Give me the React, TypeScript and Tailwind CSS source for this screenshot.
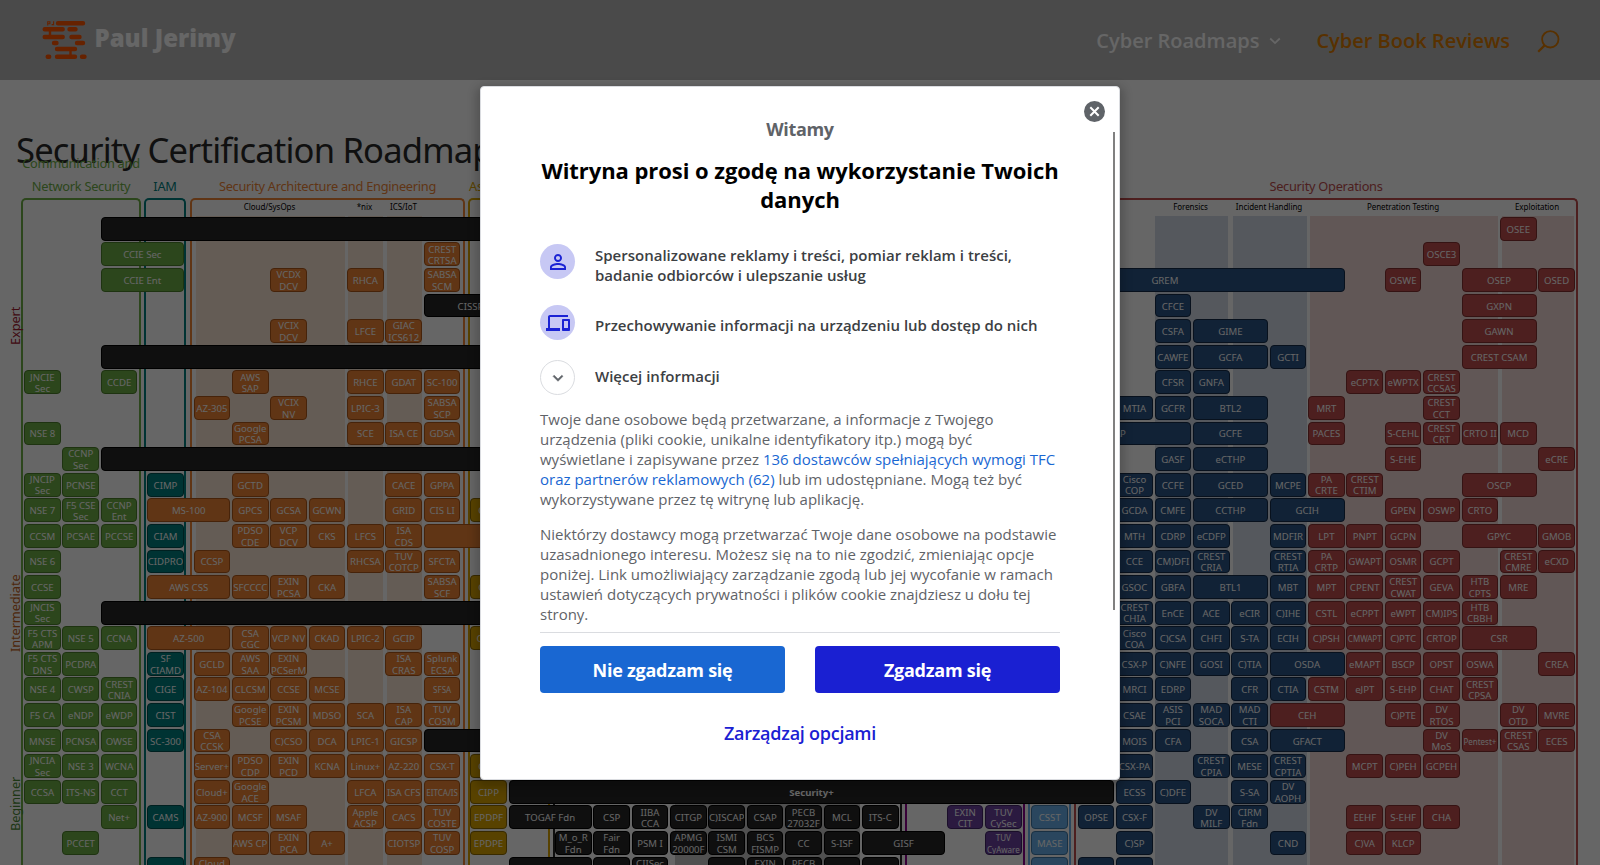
import React from "react";

type Tone = "g" | "t" | "o" | "y" | "k" | "p" | "l" | "b" | "r";

const TONES: Record<Tone, string> = {
  g: "bg-[#6fb046] border-[#4c802c]",
  t: "bg-[#008080] border-[#005050]",
  o: "bg-[#f08535] border-[#b0591a]",
  y: "bg-[#dca500] border-[#8c6900]",
  k: "bg-[#262626] border-[#000000]",
  p: "bg-[#6b41a0] border-[#412468]",
  l: "bg-[#69b0ea] border-[#3f79a8]",
  b: "bg-[#2b5587] border-[#142c4a]",
  r: "bg-[#c04e4e] border-[#853030]",
};

/* Each entry: tone, first column, optional "-" last column, label. "|" breaks the label. */
const ROWS: string[][] = [
  ["k3-33:", "r45:OSEE"],
  ["g3-5:CCIE Sec", "o13:CREST|CRTSA", "r43:OSCE3"],
  ["g3-5:CCIE Ent", "o9:VCDX|DCV", "o11:RHCA", "o13:SABSA|SCM", "b30-40:GREM", "r42:OSWE", "r44-45:OSEP", "r46:OSED"],
  ["k13-16:CISSP ISSAP", "b36:CFCE", "r44-45:GXPN"],
  ["o9:VCIX|DCV", "o11:LFCE", "o12:GIAC|ICS612", "b36:CSFA", "b37-38:GIME", "r44-45:GAWN"],
  ["k3-33:", "b36:CAWFE", "b37-38:GCFA", "b39:GCTI", "r44-45:CREST CSAM"],
  ["g1:JNCIE|Sec", "g3:CCDE", "o8:AWS|SAP", "o11:RHCE", "o12:GDAT", "o13:SC-100", "b36:CFSR", "b37:GNFA", "r41:eCPTX", "r42:eWPTX", "r43:CREST|CCSAS"],
  ["o7:AZ-305", "o9:VCIX|NV", "o11:LPIC-3", "o13:SABSA|SCP", "b35:MTIA", "b36:GCFR", "b37-38:BTL2", "r40:MRT", "r43:CREST|CCT"],
  ["g1:NSE 8", "o8:Google|PCSA", "o11:SCE", "o12:ISA CE", "o13:GDSA", "b32-36:CCSAP", "b37-38:GCFE", "r40:PACES", "r42:S-CEHL", "r43:CREST|CRT", "r44:CRTO II", "r45:MCD"],
  ["g2:CCNP|Sec", "k3-33:", "b36:GASF", "b37-38:eCTHP", "r42:S-EHE", "r46:eCRE"],
  ["g1:JNCIP|Sec", "g2:PCNSE", "t5:CIMP", "o8:GCTD", "o12:CACE", "o13:GPPA", "b35:Cisco|COP", "b36:CCFE", "b37-38:GCED", "b39:MCPE", "r40:PA|CRTE", "r41:CREST|CTIM", "r44-45:OSCP"],
  ["g1:NSE 7", "g2:F5 CSE|Sec", "g3:CCNP|Ent", "o5-7:MS-100", "o8:GPCS", "o9:GCSA", "o10:GCWN", "o12:GRID", "o13:CIS LI", "y15:CIPT", "b35:GCDA", "b36:CMFE", "b37-38:CCTHP", "b39-40:GCIH", "r42:GPEN", "r43:OSWP", "r44:CRTO"],
  ["g1:CCSM", "g2:PCSAE", "g3:PCCSE", "t5:CIAM", "o8:PDSO|CDE", "o9:VCP|DCV", "o10:CKS", "o11:LFCS", "o12:ISA|CDS", "o13-16:", "b35:MTH", "b36:CDRP", "b37:eCDFP", "b39:MDFIR", "r40:LPT", "r41:PNPT", "r42:GCPN", "r44-45:GPYC", "r46:GMOB"],
  ["g1:NSE 6", "t5:CIDPRO", "o7:CCSP", "o11:RHCSA", "o12:TUV|COTCP", "o13:SFCTA", "b35:CCE", "b36:CM)DFI", "b37:CREST|CRIA", "b39:CREST|RTIA", "r40:PA|CRTP", "r41:GWAPT", "r42:OSMR", "r43:GCPT", "r45:CREST|CMRE", "r46:eCXD"],
  ["g1:CCSE", "o5-7:AWS CSS", "o8:SFCCCC", "o9:EXIN|PCSA", "o10:CKA", "o13:SABSA|SCF", "y15:CIPT", "b35:GSOC", "b36:GBFA", "b37-38:BTL1", "b39:MBT", "r40:MPT", "r41:CPENT", "r42:CREST|CWAT", "r43:GEVA", "r44:HTB|CPTS", "r45:MRE"],
  ["g1:JNCIS|Sec", "k3-33:", "b35:CREST|CHIA", "b36:EnCE", "b37:ACE", "b38:eCIR", "b39:C)IHE", "r40:CSTL", "r41:eCPPT", "r42:eWPT", "r43:CM)IPS", "r44:HTB|CBBH"],
  ["g1:F5 CTS|APM", "g2:NSE 5", "g3:CCNA", "o5-7:AZ-500", "o8:CSA|CGC", "o9:VCP NV", "o10:CKAD", "o11:LPIC-2", "o12:GCIP", "y15:CIPM", "b35:Cisco|COA", "b36:C)CSA", "b37:CHFI", "b38:S-TA", "b39:ECIH", "r40:C)PSH", "r41:~CMWAPT", "r42:C)PTC", "r43:CRTOP", "r44-45:CSR"],
  ["g1:F5 CTS|DNS", "g2:PCDRA", "t5:SF|CIAMD", "o7:GCLD", "o8:AWS|SAA", "o9:EXIN|PCSerM", "o12:ISA|CRAS", "o13:Splunk|ECSA", "b35:CSX-P", "b36:C)NFE", "b37:GOSI", "b38:C)TIA", "b39-40:OSDA", "r41:eMAPT", "r42:BSCP", "r43:OPST", "r44:OSWA", "r46:CREA"],
  ["g1:NSE 4", "g2:CWSP", "g3:CREST|CNIA", "t5:CIGE", "o7:AZ-104", "o8:CLCSM", "o9:CCSE", "o10:MCSE", "o13:~SFSA", "b35:MRCI", "b36:EDRP", "b38:CFR", "b39:CTIA", "r40:CSTM", "r41:eJPT", "r42:S-EHP", "r43:CHAT", "r44:CREST|CPSA"],
  ["g1:F5 CA", "g2:eNDP", "g3:eWDP", "t5:CIST", "o8:Google|PCSE", "o9:EXIN|PCSM", "o10:MDSO", "o11:SCA", "o12:ISA|CAP", "o13:TUV|COSM", "b35:CSAE", "b36:ASIS|PCI", "b37:MAD|SOCA", "b38:MAD|CTI", "r39-40:CEH", "r42:C)PTE", "r43:DV|RTOS", "r45:DV|OTD", "r46:MVRE"],
  ["g1:MNSE", "g2:PCNSA", "g3:OWSE", "t5:SC-300", "o7:CSA|CCSK", "o9:C)CSO", "o10:DCA", "o11:LPIC-1", "o12:GICSP", "k13-33:", "b35:MOIS", "b36:CFA", "b38:CSA", "b39-40:GFACT", "r43:DV|MoS", "r44:~Pentest+", "r45:CREST|CSAS", "r46:ECES"],
  ["g1:JNCIA|Sec", "g2:NSE 3", "g3:WCNA", "o7:Server+", "o8:PDSO|CDP", "o9:EXIN|PCD", "o10:KCNA", "o11:Linux+", "o12:AZ-220", "o13:CSX-T", "y15:CIPT", "b35:CSX-PA", "b37:CREST|CPIA", "b38:MESE", "b39:CREST|CPTIA", "r41:MCPT", "r42:C)PEH", "r43:GCPEH"],
  ["g1:CCSA", "g2:ITS-NS", "g3:CCT", "o7:Cloud+", "o8:Google|ACE", "o11:LFCA", "o12:ISA CFS", "o13:~EITCA/IS", "y15:CIPP", "k16-34:*Security+", "b35:ECSS", "b36:C)DFE", "b38:S-SA", "b39:DV|AOPH"],
  ["g3:Net+", "t5:CAMS", "o7:AZ-900", "o8:MCSF", "o9:MSAF", "o11:Apple|ACSP", "o12:CACS", "o13:TUV|COSTE", "y15:EPDPF", "k16-18:TOGAF Fdn", "k19:CSP", "k20:IIBA|CCA", "k21:CITGP", "k22:C)ISCAP", "k23:CSAP", "k24:PECB|27032F", "k25:MCL", "k26:ITS-C", "p29:EXIN|CIT", "p30:TUV|CySec", "l32:CSST", "b34:OPSE", "b35:CSX-F", "b37:DV|MILF", "b38:CIRM|Fdn", "r41:EEHF", "r42:S-EHF", "r43:CHA"],
  ["g2:PCCET", "o8:AWS CP", "o9:EXIN|PCA", "o10:A+", "o12:CIOTSP", "o13:TUV|COSP", "y15:EPDPE", "k18:M_o_R|Fdn", "k19:Fair|Fdn", "k20:PSM I", "k21:APMG|20000F", "k22:ISMI|CSM", "k23:BCS|FISMP", "k24:CC", "k25:S-ISF", "k26-28:GISF", "p30:~TUV|CyAware", "l32:MASE", "b35:C)SP", "b39:CND", "r41:C)VA", "r42:KLCP"],
  ["t5:", "o7:Cloud|Ess", "k16-18:", "k19:", "k20:CIISec|ICSF", "k22:", "k23:EXIN|ISF", "k24:PECB|27001", "k25:", "k26:", "l32:", "b34:", "b35:"],
];

function Tile({ entry, row }: { entry: string; row: number }) {
  const colon = entry.indexOf(":");
  const tone = entry[0] as Tone;
  const [first, last] = entry.slice(1, colon).split("-").map(Number);
  let label = entry.slice(colon + 1);
  const small = label.startsWith("~");
  const bold = label.startsWith("*");
  if (small || bold) label = label.slice(1);
  return (
    <div
      className={`mr-[1.8px] flex h-[23.8px] items-center justify-center overflow-hidden rounded-[4px] border pt-[1.6px] text-center whitespace-pre text-white ${TONES[tone]} ${small ? "text-[8px]" : "text-[9.6px]"} ${bold ? "font-bold" : ""} leading-[11.5px]`}
      style={{ gridRow: row, gridColumn: `${first} / ${(last || first) + 1}` }}
    >
      {label.split("|").join("\n")}
    </div>
  );
}

type Band = { gap: string; size: string; label?: string };

function Section({ title, place, ink, box, bands = [] }: { title: string; place: string; ink: string; box: string; bands?: Band[] }) {
  return (
    <div className={`flex h-full shrink-0 flex-col ${place}`}>
      <div className={`flex h-[47px] items-end justify-center text-center text-[12.8px] leading-[23px] tracking-[-0.27px] whitespace-pre ${ink}`}>{title}</div>
      <div className={`flex flex-1 rounded-t-[5px] border-2 border-b-0 ${box}`}>
        {bands.map((b, i) => (
          <div key={i} className={`flex h-full shrink-0 flex-col ${b.gap}`}>
            <div className="-ml-[2px] flex h-4 items-center justify-center pb-[3px] text-[8px] leading-3 tracking-[-0.05px] whitespace-nowrap text-black">{b.label}</div>
            <div className={`flex-1 ${b.size}`} />
          </div>
        ))}
      </div>
    </div>
  );
}

function Roadmap() {
  return (
    <div className="grid h-[714px] grid-cols-1 grid-rows-1 overflow-hidden">
      <div className="col-start-1 row-start-1 flex h-full pl-[21px]">
        <Section title={"Communication and\nNetwork Security"} place="w-[120px]" ink="text-[#6fb046]" box="border-[#6fb046]" />
        <Section title="IAM" place="ml-[3px] w-[42px]" ink="text-[#008080]" box="border-[#008080]" />
        <Section
          title="Security Architecture and Engineering"
          place="ml-1 w-[275px]"
          ink="text-[#f08535]"
          box="border-[#f08535]"
          bands={[
            { gap: "ml-1 w-[149px]", size: "bg-[#f9e5d5]", label: "Cloud/SysOps" },
            { gap: "ml-[3px] w-[35px]", size: "bg-[#f9e5d5]", label: "*nix" },
            { gap: "ml-1 w-[35px]", size: "bg-[#f9e5d5]", label: "ICS/IoT" },
          ]}
        />
        <Section title="Asset Security" place="ml-[3px] w-[82px]" ink="text-[#dca500]" box="border-[#dca500]" />
        <Section
          title="Risk Management"
          place="ml-[3px] w-[349px]"
          ink="text-[#262626]"
          box="border-[#262626]"
          bands={[{ gap: "ml-[120px] w-[185px]", size: "bg-[#c8c8c8]" }]}
        />
        <Section title="Assessment" place="ml-[3px] w-[120px]" ink="text-[#800080]" box="border-[#8c008c]" />
        <Section title="SDLC" place="ml-[3px] w-[43px]" ink="text-[#69b0ea]" box="border-[#69b0ea]" />
        <Section
          title="Security Operations"
          place="ml-[3px] w-[504px]"
          ink="text-[#c04e4e]"
          box="border-[#c04e4e]"
          bands={[
            { gap: "ml-[79px] w-[73px]", size: "bg-[#d4dde8]", label: "Forensics" },
            { gap: "ml-[5px] w-[74px]", size: "bg-[#d4dde8]", label: "Incident Handling" },
            { gap: "ml-[3px] w-[188px]", size: "bg-[#f2dad6]", label: "Penetration Testing" },
            { gap: "ml-1 w-[72px]", size: "bg-[#f2dad6]", label: "Exploitation" },
          ]}
        />
      </div>
      <div className="col-start-1 row-start-1 grid auto-rows-[25.6px] grid-cols-[repeat(3,38.38px)_8px_38.38px_8px_repeat(7,38.38px)_8px_repeat(2,38.38px)_8px_repeat(9,38.38px)_8px_repeat(3,38.38px)_8px_38.38px_8px_repeat(13,38.38px)] content-start pt-[65.8px] pl-[24.1px]">
        {ROWS.map((row, i) => row.map((entry) => <Tile key={`${i}${entry}`} entry={entry} row={i + 1} />))}
      </div>
      <div className="col-start-1 row-start-1 flex w-[22px] flex-col items-center pl-[8px] text-[12.8px] leading-4 tracking-[-0.1px] whitespace-nowrap">
        <div className="mt-[156px] flex h-[38px] w-4 rotate-180 items-center justify-center text-[#a02030] [writing-mode:vertical-rl]">Expert</div>
        <div className="mt-[229px] flex h-[78px] w-4 rotate-180 items-center justify-center text-[#c06020] [writing-mode:vertical-rl]">Intermediate</div>
        <div className="mt-[125px] flex h-[54px] w-4 rotate-180 items-center justify-center text-[#4c8a35] [writing-mode:vertical-rl]">Beginner</div>
      </div>
    </div>
  );
}

function Logo() {
  return (
    <svg width="46" height="40" viewBox="0 0 46 40" fill="none" stroke="#ff5500" strokeWidth="4.4" strokeLinecap="round">
      <path d="M16 3.2h25M2.7 9.2h18M27.5 9.2h6M2.7 17h18M29.5 17h8M12 23h2.5M35 23h6M15 29h18M5.7 36.8h1.5M15 36.8h18M40 36.8h2.5" />
      <path d="M8 9v8M28.5 30v6" strokeWidth="2.4" />
      <path d="M5.7 5.5V1.7h2.2v2H5.7M11.6 1.2v3.4H9.6" strokeWidth="1.1" strokeLinecap="butt" />
    </svg>
  );
}

function Header() {
  return (
    <header className="flex h-20 shrink-0 items-center bg-[#b9b9b9] pl-[41.5px]">
      <Logo />
      <span className="ml-[7px] pb-[4px] font-['Noto_Sans'] text-[24px] leading-8 font-black whitespace-nowrap text-white">Paul Jerimy</span>
      <nav className="ml-auto flex items-center pt-[2px] pr-[40px] text-[20px] leading-8 font-semibold whitespace-nowrap">
        <span className="text-white">Cyber Roadmaps</span>
        <svg className="ml-[10px]" width="12" height="10" viewBox="0 0 12 10" fill="none" stroke="#fff" strokeWidth="1.8">
          <path d="M1.2 2.5l4.8 4.6L10.8 2.5" />
        </svg>
        <span className="ml-[35px] text-[#dc7a00]">Cyber Book Reviews</span>
        <svg className="ml-[27px]" width="23" height="23" viewBox="0 0 23 23" fill="none" stroke="#dc7a00" strokeWidth="1.8">
          <circle cx="13.3" cy="9.3" r="8.2" />
          <path d="M7.6 15.4L1.2 21.8" strokeWidth="2.2" />
        </svg>
      </nav>
    </header>
  );
}

function Purpose({ icon, children }: { icon: React.ReactNode; children: React.ReactNode }) {
  return (
    <div className="flex items-start">
      {icon}
      <p className="ml-5 text-[15px] leading-5 font-semibold text-[#3c4043]">{children}</p>
    </div>
  );
}

function Consent() {
  return (
    <div className="relative flex h-[694px] w-[640px] flex-col rounded-[4px] border border-[#dadce0] bg-white px-[59px] shadow-[0_4px_10px_4px_rgba(0,0,0,0.2)]">
      <svg className="absolute top-[14px] right-[14px]" width="21" height="21" viewBox="0 0 21 21">
        <circle cx="10.5" cy="10.5" r="10.5" fill="#5f6368" />
        <path d="M6.3 6.3l8.4 8.4M14.7 6.3l-8.4 8.4" stroke="#fff" strokeWidth="2" />
      </svg>
      <div className="absolute top-[45px] right-[4px] h-[478px] w-[2px] bg-[#808080]" />
      <div className="mt-[30px] text-center text-[18px] leading-6 font-bold tracking-[-0.35px] text-[#5f6368]">Witamy</div>
      <h2 className="-mx-1 mt-[15px] text-center text-[22px] leading-[28.6px] font-bold tracking-[-0.06px] text-black">
        Witryna prosi o zgodę na wykorzystanie Twoich
        <br />
        danych
      </h2>
      <div className="mt-[31px]">
        <Purpose
          icon={
            <span className="flex size-[35px] shrink-0 items-center justify-center rounded-full bg-[#c7c8f4]">
              <svg width="24" height="24" viewBox="0 0 24 24" fill="#1a22d4">
                <path d="M12 5.9a2.1 2.1 0 110 4.2 2.1 2.1 0 010-4.2m0 9c2.97 0 6.1 1.46 6.1 2.1v1.1H5.9V17c0-.64 3.13-2.1 6.1-2.1M12 4C9.79 4 8 5.79 8 8s1.79 4 4 4 4-1.79 4-4-1.79-4-4-4zm0 9c-2.67 0-8 1.34-8 4v3h16v-3c0-2.66-5.33-4-8-4z" />
              </svg>
            </span>
          }
        >
          <span className="block pt-px">
            Spersonalizowane reklamy i treści, pomiar reklam i treści,
            <br />
            badanie odbiorców i ulepszanie usług
          </span>
        </Purpose>
      </div>
      <div className="mt-5">
        <Purpose
          icon={
            <span className="flex size-[35px] shrink-0 items-center justify-center rounded-full bg-[#c7c8f4]">
              <svg width="24" height="24" viewBox="0 0 24 24" fill="#1a22d4">
                <path d="M4 6h18V4H4c-1.1 0-2 .9-2 2v11H0v3h14v-3H4V6zm19 2h-6c-.55 0-1 .45-1 1v10c0 .55.45 1 1 1h6c.55 0 1-.45 1-1V9c0-.55-.45-1-1-1zm-1 9h-4v-7h4v7z" />
              </svg>
            </span>
          }
        >
          <span className="block pt-[10px]">Przechowywanie informacji na urządzeniu lub dostęp do nich</span>
        </Purpose>
      </div>
      <div className="mt-5">
        <Purpose
          icon={
            <span className="flex size-[35px] shrink-0 items-center justify-center rounded-full border border-[#dadce0]">
              <svg width="20" height="20" viewBox="0 0 24 24" fill="#5f6368" stroke="#5f6368" strokeWidth="0.6">
                <path d="M16.59 8.59L12 13.17 7.41 8.59 6 10l6 6 6-6z" />
              </svg>
            </span>
          }
        >
          <span className="block pt-[6px]">Więcej informacji</span>
        </Purpose>
      </div>
      <p className="mt-[14px] text-[15px] leading-5 whitespace-nowrap text-[#5f6368]">
        Twoje dane osobowe będą przetwarzane, a informacje z Twojego
        <br />
        urządzenia (pliki cookie, unikalne identyfikatory itp.) mogą być
        <br />
        wyświetlane i zapisywane przez <span className="text-[#1967d2]">136 dostawców spełniających wymogi TFC</span>
        <br />
        <span className="text-[#1967d2]">oraz partnerów reklamowych (62)</span> lub im udostępniane. Mogą też być
        <br />
        wykorzystywane przez tę witrynę lub aplikację.
      </p>
      <p className="mt-[15px] text-[15px] leading-5 whitespace-nowrap text-[#5f6368]">
        Niektórzy dostawcy mogą przetwarzać Twoje dane osobowe na podstawie
        <br />
        uzasadnionego interesu. Możesz się na to nie zgodzić, zmieniając opcje
        <br />
        poniżej. Link umożliwiający zarządzanie zgodą lub jej wycofanie w ramach
        <br />
        ustawień dotyczących prywatności i plików cookie znajdziesz u dołu tej
        <br />
        strony.
      </p>
      <div className="mt-[8px] h-px bg-[#dadce0]" />
      <div className="mt-[13px] flex gap-[30px] text-[18px] font-bold tracking-[-0.25px] text-white">
        <button className="h-[47px] flex-1 rounded-[4px] bg-[#1967d2] pt-[2px]">Nie zgadzam się</button>
        <button className="h-[47px] flex-1 rounded-[4px] bg-[#1a20d2] pt-[2px]">Zgadzam się</button>
      </div>
      <button className="mt-[28px] text-[18px] leading-6 font-semibold tracking-[-0.25px] text-[#1a20d2]">Zarządzaj opcjami</button>
    </div>
  );
}

export default function App() {
  return (
    <div className="grid h-[865px] w-[1600px] grid-cols-1 grid-rows-1 overflow-hidden bg-white font-['Open_Sans','Noto_Sans',sans-serif]">
      <div className="col-start-1 row-start-1 flex flex-col overflow-hidden">
        <Header />
        <h1 className="-mb-[22px] flex h-[93px] shrink-0 items-end pl-4 font-['Noto_Sans'] text-[34.6px] leading-[47px] tracking-[-0.82px] whitespace-nowrap text-[#2a2a2a]">
          Security Certification Roadmap
        </h1>
        <div className="font-['Noto_Sans',sans-serif]">
          <Roadmap />
        </div>
      </div>
      <div className="z-10 col-start-1 row-start-1 flex justify-center bg-black/60 pt-[86px]">
        <Consent />
      </div>
    </div>
  );
}
